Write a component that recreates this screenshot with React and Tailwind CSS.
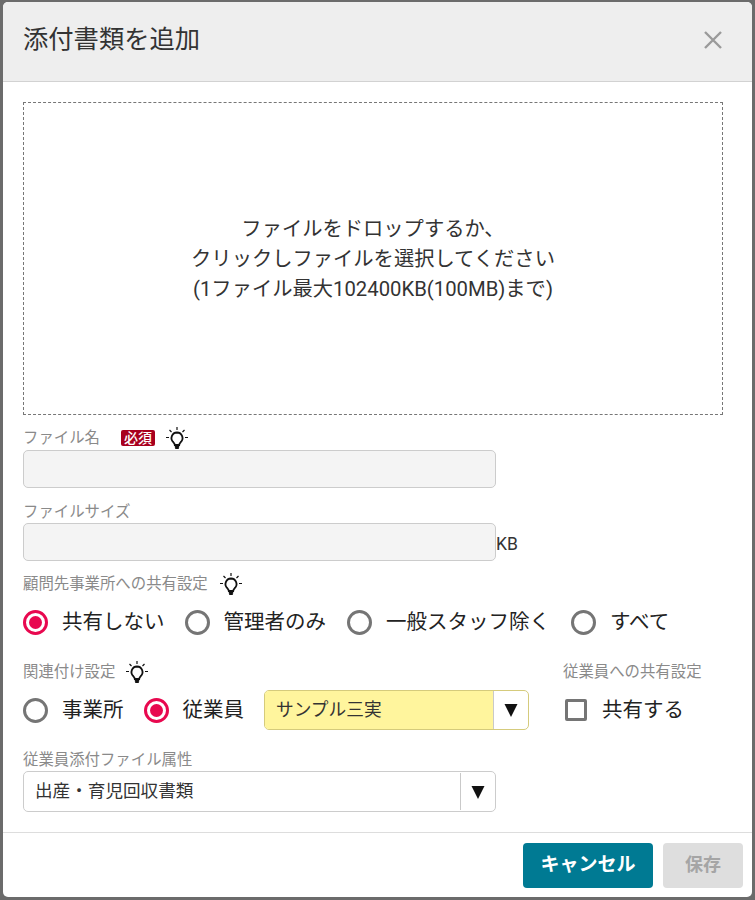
const jp = { fontFamily: 'Roboto, "Noto Sans CJK JP", sans-serif' };

function Bulb({ className = '' }) {
  return (
    <svg viewBox="0 0 24 24" className={`h-[24px] w-[24px] ${className}`} fill="none" stroke="#111" strokeWidth="1.8">
      <path d="M12 6.5a5.6 5.6 0 0 0-3.6 9.8c.8.8 1.3 1.7 1.4 2.7h4.4c.1-1 .6-1.9 1.4-2.7A5.6 5.6 0 0 0 12 6.5z" />
      <path d="M9.8 20.6h4.4M10.2 22.2h3.6" strokeWidth="1.8" />
      <path d="M12 1v3M4.5 4l2 2M19.5 4l-2 2M1 11.5h3M20 11.5h3" strokeWidth="1.2" />
    </svg>
  );
}

function Radio({ checked, label, className = '' }) {
  return (
    <label className={`flex items-center ${className}`}>
      <span className={`flex h-[25px] w-[25px] items-center justify-center rounded-full border-[3px] ${checked ? 'border-[#e8084f]' : 'border-[#757575]'}`}>
        {checked && <span className="h-[13px] w-[13px] rounded-full bg-[#e8084f]" />}
      </span>
      <span className="ml-[14px] text-[20.5px] leading-none text-[#222]">{label}</span>
    </label>
  );
}

function Label({ children, className = '' }) {
  return <span className={`pt-[2px] text-[15.4px] leading-none text-[#8a8a8a] ${className}`}>{children}</span>;
}

function SelectArrow({ className = '' }) {
  return (
    <span className={`flex w-[35px] items-center justify-center border-l border-[#c9c9c9] ${className}`}>
      <svg viewBox="0 0 14 14" className="h-[14px] w-[14px]"><path d="M0.5 1h13L7 14z" fill="#111" /></svg>
    </span>
  );
}

export default function App() {
  return (
    <div className="h-[900px] w-[755px] overflow-hidden bg-[#6b6b6b] pb-[3px] pl-[3px] pr-[3px] pt-[2px]" style={jp}>
      <div className="flex h-[895px] flex-col overflow-hidden rounded-[5px] bg-white">
        <header className="flex h-[80px] shrink-0 items-center justify-between border-b border-[#d2d2d2] bg-[#eeeeee] pb-[4px] pl-[20px] pr-[30px]">
          <h1 className="text-[25.3px] font-normal text-[#333]">添付書類を追加</h1>
          <svg viewBox="0 0 18 18" className="h-[18px] w-[18px]" stroke="#9a9a9a" strokeWidth="2.4"><path d="M1 1l16 16M17 1L1 17" /></svg>
        </header>

        <main className="flex-1 pl-[20px] pr-[29px]">
          <div className="mt-[20px] flex h-[313px] flex-col items-center justify-center border border-dashed border-[#777] text-center text-[20.3px] leading-[30px] text-[#333]">
            <p>ファイルをドロップするか、</p>
            <p>クリックしファイルを選択してください</p>
            <p>(1ファイル最大102400KB(100MB)まで)</p>
          </div>

          <div className="mt-[11px] flex h-[24px] items-center">
            <Label>ファイル名</Label>
            <span className="ml-[21px] rounded-[2px] bg-[#a8001e] px-[3px] text-[14px] font-medium leading-[16px] text-white">必須</span>
            <Bulb className="ml-[10px]" />
          </div>
          <div className="h-[38px] w-[473px] rounded-[5px] border border-[#cccccc] bg-[#f4f4f4]" />

          <div className="mt-[16px] flex h-[15px] items-center"><Label>ファイルサイズ</Label></div>
          <div className="mt-[4px] flex items-center">
            <div className="h-[38px] w-[473px] rounded-[5px] border border-[#cccccc] bg-[#f4f4f4]" />
            <span className="pt-[4px] text-[17.5px] leading-[24px] text-[#333]">KB</span>
          </div>

          <div className="mt-[11px] flex h-[24px] items-center">
            <Label>顧問先事業所への共有設定</Label>
            <Bulb className="ml-[11px]" />
          </div>
          <div className="mt-[14px] flex items-center">
            <Radio checked label="共有しない" />
            <Radio label="管理者のみ" className="ml-[20px]" />
            <Radio label="一般スタッフ除く" className="ml-[21px]" />
            <Radio label="すべて" className="ml-[21px]" />
          </div>

          <div className="mt-[25px] flex">
            <div>
              <div className="flex h-[24px] items-center">
                <Label>関連付け設定</Label>
                <Bulb className="ml-[10px]" />
              </div>
              <div className="mt-[6px] flex items-center">
                <Radio label="事業所" />
                <Radio checked label="従業員" className="ml-[20px]" />
                <div className="ml-[20px] flex h-[40px] w-[265px] overflow-hidden rounded-[5px] border border-[#d5cb7c] bg-white">
                  <span className="flex-1 bg-[#fff59d] pl-[11px] text-[17.7px] leading-[38px] text-[#333]">サンプル三実</span>
                  <SelectArrow />
                </div>
              </div>
            </div>
            <div className="ml-[34px]">
              <div className="flex h-[24px] items-center"><Label>従業員への共有設定</Label></div>
              <label className="mt-[6px] flex h-[40px] items-center">
                <span className="ml-[2px] h-[22px] w-[22px] rounded-[2px] border-[3px] border-[#757575]" />
                <span className="ml-[15px] text-[20.5px] leading-none text-[#222]">共有する</span>
              </label>
            </div>
          </div>

          <div className="mt-[22px] flex h-[15px] items-center"><Label>従業員添付ファイル属性</Label></div>
          <div className="mt-[4px] flex h-[41px] w-[473px] rounded-[5px] border border-[#cccccc] py-[1px]">
            <span className="flex-1 pl-[11px] text-[17.6px] leading-[37px] text-[#333]">出産・育児回収書類</span>
            <SelectArrow />
          </div>
        </main>

        <footer className="flex h-[65px] shrink-0 items-center justify-end gap-[10px] border-t border-[#dddddd] pr-[9px]">
          <button className="h-[45px] w-[130px] rounded-[4px] bg-[#007a93] text-[19px] font-bold text-white">キャンセル</button>
          <button className="h-[45px] w-[80px] rounded-[4px] bg-[#dedede] pb-[2px] text-[18px] font-bold text-[#a5a5a5]">保存</button>
        </footer>
      </div>
    </div>
  );
}
